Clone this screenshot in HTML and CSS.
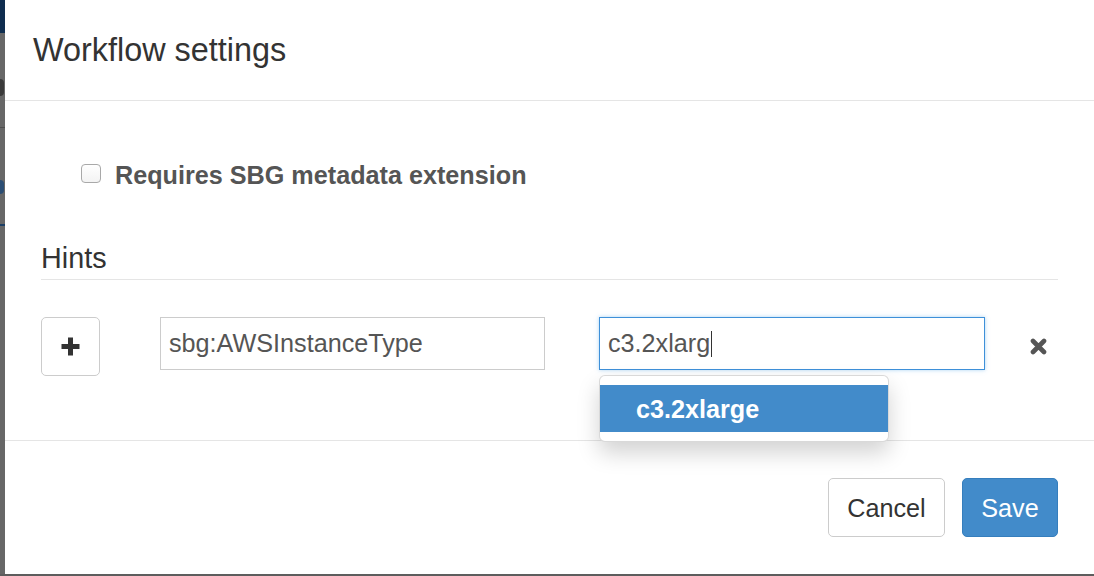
FILE: index.html
```html
<!DOCTYPE html>
<html>
<head>
<meta charset="utf-8">
<title>Workflow settings</title>
<link rel="stylesheet" href="styles.css">
</head>
<body>
<div class="screen">
  <div class="under">
    <div class="under-nav"></div>
    <div class="under-glyph"></div>
    <div class="under-rule"></div>
    <div class="under-link"></div>
    <div class="under-bar"></div>
  </div>
  <div class="modal">
    <div class="modal-header">
      <h4 class="modal-title">Workflow settings</h4>
    </div>
    <div class="modal-body">
      <label class="checkbox">
        <span class="cb"></span>
        <span class="cb-label">Requires SBG metadata extension</span>
      </label>
      <div class="legend">Hints</div>
      <div class="hint-row">
        <button class="btn btn-add" type="button">
          <svg width="19" height="19" viewBox="0 0 19 19"><path d="M7 0.5h5v6.5h6.5v5h-6.5v6.5h-5v-6.5h-6.5v-5h6.5z" fill="#333"/></svg>
        </button>
        <div class="field">sbg:AWSInstanceType</div>
        <div class="field-wrap">
          <div class="field focus">c3.2xlarg<span class="caret"></span></div>
          <ul class="typeahead">
            <li class="active"><strong>c3.2xlarg</strong>e</li>
          </ul>
        </div>
        <span class="remove">
          <svg width="17" height="17" viewBox="0 0 17 17"><path d="M3 3L14 14M14 3L3 14" stroke="#555" stroke-width="4.6" stroke-linecap="round"/></svg>
        </span>
      </div>
    </div>
    <div class="modal-footer">
      <button class="btn btn-default" type="button">Cancel</button>
      <button class="btn btn-primary" type="button">Save</button>
    </div>
  </div>
  <div class="under-bottom"></div>
</div>
</body>
</html>
```
FILE: styles.css
```css
* { box-sizing: border-box; }
html, body { margin: 0; padding: 0; }
body {
  background: #666;
  font-family: "Liberation Sans", Arial, Helvetica, sans-serif;
  font-size: 25.2px;
  line-height: 36px;
  color: #333;
  overflow: hidden;
}
.screen {
  display: grid;
  grid-template-columns: 5px 1089px;
  grid-template-rows: 574px 2px;
  width: 1094px;
  height: 576px;
}
.under {
  display: flex;
  flex-direction: column;
  background: #676767;
}
.under-nav { height: 33px; background: #0f2d4f; }
.under-glyph { height: 17px; width: 4px; margin-top: 46px; background: #3a3a3a; border-radius: 0 8px 8px 0; }
.under-rule { height: 1px; margin-top: 31px; background: #4e4e4e; }
.under-link { height: 14px; width: 4px; margin-top: 52px; background: #2b4d73; border-radius: 0 7px 7px 0; }
.under-bar { height: 2px; margin-top: 30px; background: #1c3f66; }
.under-bottom {
  grid-column: 1 / span 2;
  background: #5d5d5d;
}
.modal {
  background: #fff;
  display: flex;
  flex-direction: column;
}
.modal-header {
  padding: 32px 28px 32px;
  border-bottom: 1px solid #e5e5e5;
  height: 101px;
}
.modal-title {
  margin: 0;
  font-size: 32.4px;
  line-height: 36px;
  font-weight: normal;
  color: #333;
}
.modal-body {
  padding: 56px 36px 0;
  flex: 1;
}
.checkbox {
  display: flex;
  align-items: center;
  margin-left: 40px;
  height: 36px;
}
.cb {
  width: 20px;
  height: 19px;
  border: 1px solid #a9a9a9;
  border-radius: 4px;
  background: linear-gradient(#fff, #f3f3f3);
  margin-right: 14px;
  margin-top: -4px;
}
.cb-label {
  font-weight: bold;
  color: #555;
}
.legend {
  margin-top: 49px;
  font-size: 28.8px;
  line-height: 32px;
  color: #333;
  padding-bottom: 5px;
  border-bottom: 1px solid #e5e5e5;
}
.hint-row {
  margin-top: 37px;
  display: grid;
  grid-template-columns: 119px 439px 431px 1fr;
  align-items: start;
}
.btn {
  font-family: inherit;
  font-size: 25.2px;
  line-height: 36px;
  height: 59px;
  padding: 0 18px;
  border: 1px solid #ccc;
  border-radius: 5px;
  background: #fff;
  color: #333;
  cursor: pointer;
}
.btn-add {
  width: 59px;
  padding: 0;
  display: flex;
  align-items: center;
  justify-content: center;
}
.btn-add svg { display: block; }
.field {
  width: 385px;
  height: 53px;
  border: 1px solid #ccc;
  padding: 0 8px;
  line-height: 51px;
  color: #555;
  background: #fff;
  display: flex;
  align-items: center;
}
.field-wrap { position: relative; }
.field.focus {
  width: 386px;
  border-color: #3e90d9;
  box-shadow: 0 0 4px rgba(102, 175, 233, 0.55);
}
.caret {
  display: inline-block;
  width: 1px;
  height: 26px;
  background: #333;
  margin-left: 1px;
}
.typeahead {
  position: absolute;
  top: 58px;
  left: 0;
  width: 290px;
  margin: 0;
  padding: 9px 0;
  list-style: none;
  background: #fff;
  border: 1px solid rgba(0, 0, 0, 0.15);
  border-radius: 6px;
  box-shadow: 0 11px 22px rgba(0, 0, 0, 0.175);
  z-index: 2;
}
.typeahead li {
  padding: 5.5px 36px;
  line-height: 36px;
  color: #fff;
  font-weight: bold;
}
.typeahead li.active { background: #428bca; }
.remove {
  display: flex;
  margin-top: 21px;
}
.remove svg { display: block; }
.modal-footer {
  border-top: 1px solid #e5e5e5;
  padding: 37px 36px 37px;
  display: flex;
  justify-content: flex-end;
  gap: 17px;
}
.btn-default { width: 117px; }
.btn-primary {
  width: 96px;
  background: #428bca;
  border-color: #357ebd;
  color: #fff;
}
```
